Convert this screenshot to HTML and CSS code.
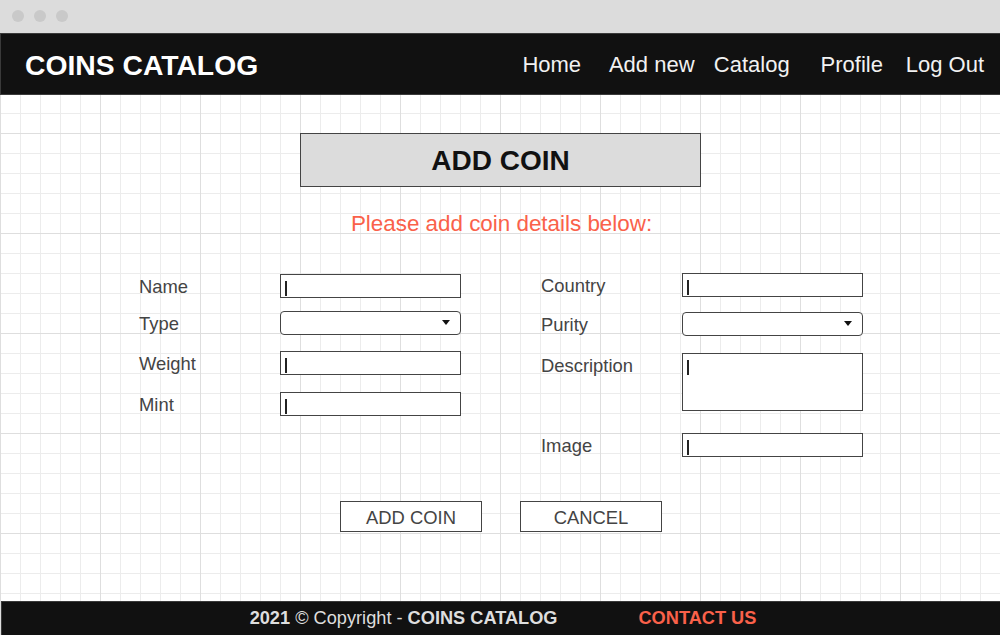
FILE: index.html
```html
<!DOCTYPE html>
<html lang="en">
<head>
<meta charset="utf-8">
<title>Coins Catalog - Add Coin</title>
<link rel="stylesheet" href="styles.css">
</head>
<body>
<div class="chrome">
  <span class="dot"></span><span class="dot"></span><span class="dot"></span>
</div>
<div class="page">
  <header class="nav">
    <div class="brand">COINS CATALOG</div>
    <nav class="links">
      <a class="link">Home</a>
      <a class="link">Add new</a>
      <a class="link">Catalog</a>
      <a class="link">Profile</a>
      <a class="link last">Log Out</a>
    </nav>
  </header>
  <main class="main">
    <h1 class="title-box">ADD COIN</h1>
    <p class="subtitle">Please add coin details below:</p>
    <form class="form">
      <div class="col col-left">
        <div class="row r1"><label class="label">Name</label><div class="field"><span class="caret"></span></div></div>
        <div class="row r2"><label class="label">Type</label><div class="field select"><span class="arrow"></span></div></div>
        <div class="row r3"><label class="label">Weight</label><div class="field"><span class="caret"></span></div></div>
        <div class="row r4"><label class="label">Mint</label><div class="field"><span class="caret"></span></div></div>
      </div>
      <div class="col col-right">
        <div class="row"><label class="label">Country</label><div class="field"><span class="caret"></span></div></div>
        <div class="row rr2"><label class="label">Purity</label><div class="field select"><span class="arrow"></span></div></div>
        <div class="row rr3"><label class="label">Description</label><div class="field area"><span class="caret"></span></div></div>
        <div class="row rr4"><label class="label">Image</label><div class="field"><span class="caret"></span></div></div>
      </div>
    </form>
    <div class="actions">
      <button class="btn" type="button">ADD COIN</button>
      <button class="btn" type="button">CANCEL</button>
    </div>
  </main>
  <footer class="footer">
    <span class="copy"><b>2021</b> © Copyright - <b>COINS CATALOG</b></span>
    <span class="contact">CONTACT US</span>
  </footer>
</div>
</body>
</html>
```

FILE: styles.css
```css
* { box-sizing: border-box; }
html, body { margin: 0; padding: 0; }
body {
  width: 1000px;
  height: 635px;
  overflow: hidden;
  font-family: "Liberation Sans", Arial, sans-serif;
  background: #fff;
  display: flex;
  flex-direction: column;
}
.chrome {
  height: 33px;
  background: #dcdcdc;
  display: flex;
  align-items: center;
  gap: 10px;
  padding: 0 0 1px 12px;
  flex: none;
}
.dot {
  width: 12px;
  height: 12px;
  border-radius: 50%;
  background: #c9c9c9;
}
.page {
  flex: 1;
  display: flex;
  flex-direction: column;
  background-color: #fff;
  background-image:
    linear-gradient(#dedede 1px, transparent 1px),
    linear-gradient(90deg, #dedede 1px, transparent 1px),
    linear-gradient(#ececec 1px, transparent 1px),
    linear-gradient(90deg, #ececec 1px, transparent 1px);
  background-size: 100px 100px, 100px 100px, 20px 20px, 20px 20px;
}
.nav {
  height: 62px;
  background: #111;
  border: 1px solid #3a3a3a;
  border-right: none;
  display: flex;
  align-items: center;
  padding: 2px 12px 0 24px;
  flex: none;
}
.brand {
  color: #fff;
  font-weight: bold;
  font-size: 28.3px;
}
.links {
  margin-left: auto;
  display: flex;
}
.link {
  width: 100px;
  text-align: center;
  color: #f2f2f2;
  font-size: 22px;
}
.link.last {
  width: auto;
  padding: 0 4px;
}
.main {
  flex: 1;
  display: flex;
  flex-direction: column;
  padding-top: 38px;
}
.title-box {
  margin: 0 0 0 300px;
  width: 401px;
  height: 54px;
  background: #dcdcdc;
  border: 1px solid #444;
  color: #111;
  font-size: 28px;
  font-weight: bold;
  display: flex;
  align-items: center;
  justify-content: center;
  padding-top: 1px;
}
.subtitle {
  margin: 22px 0 0;
  text-align: center;
  padding-left: 3px;
  color: #fa614a;
  font-size: 22.4px;
  line-height: 30px;
}
.form {
  margin: 34px 0 0 139px;
  display: flex;
  gap: 80px;
}
.col {
  display: flex;
  flex-direction: column;
}
.col-left { padding-top: 1px; }
.row {
  display: grid;
  grid-template-columns: 141px 181px;
  align-items: start;
}
.r2 { margin-top: 13px; }
.r3 { margin-top: 16px; }
.r4 { margin-top: 17px; }
.rr2 { margin-top: 15px; }
.rr3 { margin-top: 17px; }
.rr4 { margin-top: 22px; }
.label {
  color: #444;
  font-size: 18.4px;
  line-height: 23px;
  padding-top: 1px;
}
.field {
  position: relative;
  height: 24px;
  background: #fff;
  border: 1px solid #444;
  padding: 6px 0 0 4px;
}
.field.select {
  border-radius: 4px;
}
.field.area {
  height: 58px;
}
.caret {
  display: block;
  width: 2px;
  height: 15px;
  background: #222;
}
.arrow {
  position: absolute;
  right: 10px;
  top: 8px;
  width: 0;
  height: 0;
  border-left: 4px solid transparent;
  border-right: 4px solid transparent;
  border-top: 5px solid #111;
}
.actions {
  margin-top: 44px;
  display: flex;
  justify-content: center;
  gap: 38px;
  padding-left: 2px;
}
.btn {
  width: 142px;
  height: 31px;
  background: #fff;
  border: 1px solid #444;
  border-radius: 0;
  color: #444;
  font-family: "Liberation Sans", Arial, sans-serif;
  font-size: 18.4px;
  padding: 2px 0 0;
}
.footer {
  height: 34px;
  margin-left: 1px;
  background: #111;
  border-top: 1px solid #3a3a3a;
  border-left: 1px solid #3a3a3a;
  display: flex;
  align-items: center;
  justify-content: center;
  gap: 81px;
  font-size: 18.2px;
  flex: none;
  padding-left: 4px;
}
.copy { color: #dedede; }
.contact {
  color: #fa614a;
  font-weight: bold;
}
```
